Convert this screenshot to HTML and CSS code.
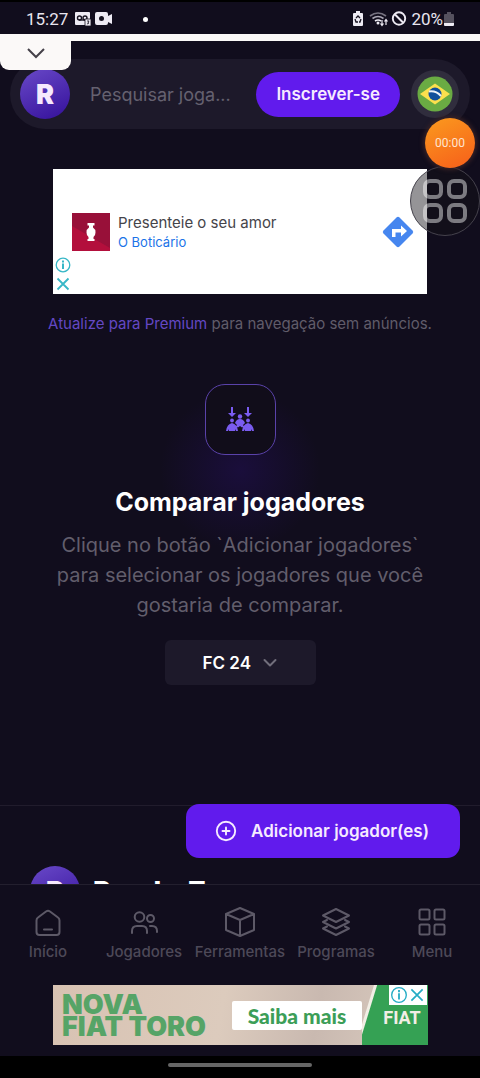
FILE: index.html
```html
<!DOCTYPE html>
<html lang="pt-BR">
<head>
<meta charset="utf-8">
<meta name="viewport" content="width=device-width, initial-scale=1">
<title>Comparar jogadores</title>
<link rel="stylesheet" href="styles.css">
</head>
<body>
<div class="app">
  <div class="status">
    <span class="clock">15:27</span>
    <svg class="status-left" width="38" height="16" viewBox="0 0 38 16">
      <rect x="1" y="1" width="15" height="13" rx="1" fill="#eeebf4"/>
      <g fill="none" stroke="#171321" stroke-width="1.4"><circle cx="5.500" cy="7" r="2"/><circle cx="11" cy="7" r="2"/><path d="M5 9h7"/></g>
      <rect x="11" y="8" width="6" height="7" fill="#eeebf4" stroke="#171321" stroke-width=".8"/><path d="M13 10h2l-1 1.500 1 .5-2 1" stroke="#171321" stroke-width=".8" fill="none"/>
      <path d="M23 1h9q2 0 2 2v2l4-2v10l-4-2v1q0 2-2 2h-9q-2 0-2-2V3q0-2 2-2z" fill="#eeebf4"/><circle cx="27.500" cy="7.500" r="2.500" fill="#171321"/>
    </svg>
    <span class="dot"></span>
    <svg class="status-right" width="56" height="18" viewBox="0 0 56 18">
      <path d="M3 3h2V1h4v2h2q1 0 1 1v11q0 1-1 1H3q-1 0-1-1V4q0-1 1-1z" fill="#eeebf4"/>
      <path d="M5 8l2-2 2 2M10 9l-1 3H8M4 9l1 3h2" stroke="#171321" stroke-width="1.300" fill="none"/>
      <g fill="none" stroke-width="1.700"><path d="M19 6q8-6 16 0" stroke="#777381"/><path d="M21.500 8.500q5.500-4 11 0" stroke="#aaa6b4"/><path d="M24 11q3-2 6 0" stroke="#eeebf4"/></g>
      <circle cx="27" cy="13" r="1.500" fill="#eeebf4"/>
      <path d="M31 10v5M29.500 13.500L31 15.500l1.500-2M35 15v-5M33.500 11.500L35 9.500l1.500 2" stroke="#eeebf4" stroke-width="1.200" fill="none"/>
      <circle cx="48" cy="8.500" r="6.200" fill="none" stroke="#eeebf4" stroke-width="1.900"/><path d="M44 4.500l8 8" stroke="#eeebf4" stroke-width="1.900"/>
    </svg>
    <span class="battery-text">20%</span>
    <svg width="12" height="16" viewBox="0 0 12 16"><path d="M2 3h2V1h4v2h2q1 0 1 1v9H1V4q0-1 1-1z" fill="#55515e"/><path d="M1 12h10v2q0 1-1 1H2q-1 0-1-1z" fill="#eeebf4"/></svg>
  </div>
  <div class="strip">
    <button class="pull-tab" aria-label="Recolher anúncio"><svg width="20" height="12" viewBox="0 0 20 12"><path d="M2 2l8 8 8-8" fill="none" stroke="#444149" stroke-width="2"/></svg></button>
  </div>

  <header class="topbar">
    <a class="logo" href="#" aria-label="RenderZ">R</a>
    <input class="search" type="text" placeholder="Pesquisar joga..." aria-label="Pesquisar jogadores">
    <button class="signup">Inscrever-se</button>
    <button class="flag" aria-label="Idioma">
      <svg width="36" height="36" viewBox="0 0 36 36"><circle cx="18" cy="18" r="17.500" fill="#6aab43"/><path d="M18 7.500L33 18 18 28.500 3 18z" fill="#fce04d"/><circle cx="18" cy="18" r="6.500" fill="#11519c"/><path d="M12 15.500q7-1 12 4.500" fill="none" stroke="#eef3f8" stroke-width="2"/></svg>
    </button>
  </header>

  <div class="stage">
    <main class="content">
      <section class="ad">
        <svg class="ad-brand" width="38" height="38" viewBox="0 0 38 38"><path fill="#b30f3c" d="M0 0h38v38H0z"/><path fill="#981039" d="M0 13l38 22V0H0z"/><path fill="#fff" d="M15.500 10h7v2.500h-1.500v2q2.500 1.500 2.500 5 0 3-2 4.500v2h1v2h-7v-2h1v-2q-2-1.500-2-4.500 0-3.500 2.500-5v-2h-1.500z"/></svg>
        <div class="ad-copy"><span class="ad-title">Presenteie o seu amor</span><a class="ad-link" href="#">O Boticário</a></div>
        <a class="ad-go" href="#" aria-label="Abrir rota"><svg width="32" height="32" viewBox="0 0 32 32"><path d="M14.500 1.500q1.500-1.500 3 0l13 13q1.500 1.500 0 3l-13 13q-1.500 1.500-3 0l-13-13q-1.500-1.500 0-3z" fill="#4686ef"/><path d="M10 21v-8h9V9.500l6 5.500-6 5.500V16.500h-5.500V21z" fill="#fff"/></svg></a>
        <div class="ad-marks">
          <svg width="16" height="16" viewBox="0 0 16 16" fill="none" stroke="#38b7c7"><circle cx="8" cy="8" r="6.800" stroke-width="1.300"/><path d="M8 6.500V12M8 3.500v2" stroke-width="2"/></svg>
          <svg width="16" height="16" viewBox="0 0 16 16"><path d="M2.500 2.500l11 11M13.500 2.500l-11 11" stroke="#38b7c7" stroke-width="1.800"/></svg>
        </div>
      </section>
      <p class="premium"><a href="#">Atualize para Premium</a> para navegação sem anúncios.</p>

      <section class="compare">
        <div class="compare-icon">
          <svg width="30" height="28" viewBox="0 0 30 28" fill="#7a5cf0"><path d="M6 1h2v6h3l-4 4-4-4h3zM22 1h2v6h3l-4 4-4-4h3z"/><circle cx="7" cy="14.500" r="1.900"/><circle cx="15" cy="10.500" r="2.200"/><circle cx="23" cy="14.500" r="1.900"/><path d="M15 13q3.500 0 5 4l-2 2 1 1.500-2 1-2-1.500-2 1.500-2-1 1-1.500-2-2q1.500-4 5-4zM7 17q5 1 6 8h-2l-1-2v2H4v-2l-1 2H1q1-7 6-8zM23 17q5 1 6 8h-2l-1-2v2h-6v-2l-1 2h-2q1-7 6-8z"/></svg>
        </div>
        <h1>Comparar jogadores</h1>
        <p class="hint">Clique no botão `Adicionar jogadores` para selecionar os jogadores que você gostaria de comparar.</p>
        <label class="version">
          <select aria-label="Versão do jogo"><option>FC 24</option></select>
          <svg width="14" height="10" viewBox="0 0 14 10"><path d="M1.500 2L7 7.500 12.500 2" fill="none" stroke="#716e7b" stroke-width="2" stroke-linecap="round" stroke-linejoin="round"/></svg>
        </label>
      </section>

      <footer class="footer"><span class="logo">R</span><span class="brand">RenderZ</span></footer>
    </main>
    <button class="add"><svg width="22" height="22" viewBox="0 0 22 22" fill="none" stroke="#f5eaff" stroke-width="1.900" stroke-linecap="round"><circle cx="11" cy="11" r="9.200"/><path d="M11 7.500v7M7.500 11h7"/></svg>Adicionar jogador(es)</button>
  </div>

  <nav class="tabs">
    <a href="#"><svg viewBox="0 0 32 32"><path d="M4.500 13.500q0-2 1.500-3l8-6q2-1.300 4 0l8 6q1.500 1 1.500 3V25q0 3-3 3h-17q-3 0-3-3zM12 22.500h8"/></svg>Início</a>
    <a href="#"><svg viewBox="0 0 32 32"><circle cx="11.500" cy="10" r="4.800"/><circle cx="22.500" cy="11.500" r="3.500"/><path d="M4 26v-2q0-5 5-5h5q5 0 5 5v2M22 19h2q5 0 5 5v1"/></svg>Jogadores</a>
    <a href="#"><svg viewBox="0 0 32 32"><path d="M16 1l14 6v16l-14 6-14-6V7zM2 7l14 6 14-6M16 13v16"/></svg>Ferramentas</a>
    <a href="#"><svg viewBox="0 0 32 32"><path d="M16 2l13 6.500L16 15 3 8.500zM7 13l-4 2 13 6.500L29 15l-4-2M7 19.500l-4 2L16 28l13-6.500-4-2"/></svg>Programas</a>
    <a href="#"><svg viewBox="0 0 32 32"><rect x="3.500" y="2.500" width="10" height="10" rx="1.500"/><rect x="18.500" y="2.500" width="10" height="10" rx="1.500"/><rect x="3.500" y="17.500" width="10" height="10" rx="1.500"/><rect x="18.500" y="17.500" width="10" height="10" rx="1.500"/></svg>Menu</a>
  </nav>

  <section class="banner">
    <div class="banner-title"><span>NOVA</span><span>FIAT TORO</span></div>
    <a class="banner-cta" href="#">Saiba mais</a>
    <div class="banner-brand">FIAT</div>
    <div class="banner-marks">
      <svg width="18" height="18" viewBox="0 0 16 16" fill="none" stroke="#25acc5"><circle cx="8" cy="8" r="6.500" stroke-width="1.200"/><path d="M8 6.500V12M8 3.500v2" stroke-width="1.600"/></svg>
      <svg width="18" height="18" viewBox="0 0 16 16"><path d="M3 3l10 10M13 3L3 13" stroke="#25acc5" stroke-width="1.500"/></svg>
    </div>
  </section>
  <div class="gesture"><span></span></div>

  <div class="recorder">00:00</div>
  <button class="assist" aria-label="Atalhos"><svg width="46" height="46" viewBox="0 0 46 46" fill="none" stroke="#fff" stroke-opacity=".45" stroke-width="4"><rect x="3" y="3" width="16" height="16" rx="5"/><rect x="27" y="3" width="16" height="16" rx="5"/><rect x="3" y="27" width="16" height="16" rx="5"/><rect x="27" y="27" width="16" height="16" rx="5"/></svg></button>
</div>
</body>
</html>
```

FILE: styles.css
```css
* { box-sizing: border-box; }
body { margin: 0; background: #110d1d; color: #fff; font-family: Inter, "Noto Sans", sans-serif; }
a { color: inherit; text-decoration: none; }
button, input, select { font: inherit; color: inherit; border: 0; padding: 0; margin: 0; background: none; }
svg { display: block; flex: none; }
h1, p { margin: 0; }

.app { position: relative; display: flex; flex-direction: column; height: 100vh; overflow: hidden; }

.status { display: flex; align-items: center; height: 34px; padding: 2px 25px 0 26px; border-top: 2px solid #000; font: 17px Roboto, sans-serif; color: #e8e5ef; }
.status-left { margin-left: 6px; }
.dot { width: 5px; height: 5px; margin-left: 31px; border-radius: 50%; background: #fff; }
.status-right { margin: 0 4px 0 auto; }
.strip { position: relative; height: 7px; background: #fbf9f8; }
.pull-tab { position: absolute; top: 0; left: 0; z-index: 2; display: flex; justify-content: center; padding: 13px 0 11px; width: 71px; height: 36px; background: #fbf9f8; border-radius: 0 0 9px 9px; }

.topbar { display: flex; align-items: center; height: 70px; margin: 18px 10px 0; padding: 0 11px 0 10px; border-radius: 35px; background: #1d192a; }
.logo { display: flex; align-items: center; justify-content: center; flex: none; width: 50px; height: 50px; border-radius: 50%; background: linear-gradient(155deg, #6949c8, #34109a); font-size: 27px; font-weight: 900; color: #f6e9fd; }
.search { flex: 1; min-width: 0; margin: 0 16px 0 20px; height: 44px; font-size: 18px; outline: 0; text-overflow: ellipsis; }
.search::placeholder { color: #656170; opacity: 1; }
.signup { height: 45px; padding: 0 20px; border-radius: 23px; background: #611bed; font-size: 17px; font-weight: 600; color: #f6eaff; }
.flag { display: flex; align-items: center; justify-content: center; width: 48px; height: 48px; margin-left: 11px; border-radius: 50%; background: #302d3d; }

.stage { position: relative; flex: 1; min-height: 0; }
.content { height: 100%; padding-top: 40px; overflow: hidden; }
.ad { position: relative; display: flex; align-items: center; height: 125px; margin: 0 53px; padding: 0 13px 0 19px; background: #fff; color: #45444a; }
.ad-copy { display: flex; flex-direction: column; flex: 1; margin-left: 8px; }
.ad-title { font-size: 15px; line-height: 20px; }
.ad-link { font-size: 13px; line-height: 18px; color: #1a73e8; }
.ad-marks { position: absolute; left: 2px; bottom: 2px; display: grid; gap: 3px; }
.premium { margin-top: 20px; font-size: 15px; line-height: 20px; text-align: center; color: #605c6a; }
.premium a { color: #6448c4; }

.compare { display: flex; flex-direction: column; align-items: center; height: 471px; padding: 50px 50px 0; background: radial-gradient(circle at 50% 136px, #1a0e3b 0, #110d1d 80px); }
.compare-icon { display: flex; align-items: center; justify-content: center; width: 71px; height: 71px; border: 1px solid #5a42aa; border-radius: 20px; background: #110d1a; }
h1 { margin-top: 31px; font-size: 25px; line-height: 32px; font-weight: 700; }
.hint { margin-top: 12px; font-size: 20px; line-height: 30px; text-align: center; color: #625e6c; }
.version { position: relative; margin-top: 20px; }
.version select { width: 151px; height: 45px; padding: 0 60px 0 38px; border-radius: 6px; appearance: none; background: #1d192a; font-size: 17px; font-weight: 600; }
.version svg { position: absolute; right: 39px; top: 18px; pointer-events: none; }

.footer { display: flex; align-items: center; gap: 13px; padding: 60px 30px; border-top: 1px solid #211c2c; }
.brand { font-size: 27px; font-weight: 800; }
.add { position: absolute; right: 20px; bottom: 26px; display: flex; align-items: center; gap: 14px; height: 54px; padding: 0 31px 0 29px; border-radius: 13px; background: #611bed; font-size: 17px; font-weight: 600; color: #f6eaff; }

.tabs { display: grid; grid-template-columns: repeat(5, 1fr); height: 101px; padding-top: 22px; border-top: 1px solid #231f2e; }
.tabs a { display: flex; flex-direction: column; align-items: center; gap: 3px; font-size: 15px; font-weight: 500; line-height: 20px; color: #4d4958; }
.tabs svg { width: 32px; height: 32px; fill: none; stroke: #5d5967; stroke-width: 2; stroke-linejoin: round; stroke-linecap: round; }

.banner { position: relative; display: flex; align-items: center; height: 60px; margin: 0 52px 0 53px; padding-left: 9px; background: linear-gradient(100deg, #d8c2b2, #dccbbd 45%, #c9b9b0 70%, #dccdc1); font-family: Lato, sans-serif; font-weight: 900; color: #56a467; overflow: hidden; }
.banner-title { display: grid; flex: 1; padding-top: 2px; font-family: Inter, sans-serif; font-size: 27px; line-height: 22px; white-space: nowrap; }
.banner-cta { display: flex; align-items: center; justify-content: center; width: 130px; height: 29px; border-radius: 2px; background: #fff; color: #3c9e58; font-size: 21px; }
.banner-brand { display: flex; align-items: center; justify-content: center; width: 66px; height: 60px; padding: 4px 0 0 14px; background: linear-gradient(107deg, transparent 11px, #f2eee5 12px 14px, #35a154 15px); color: #f2eee5; font: 700 18px Roboto, sans-serif; }
.banner-marks { position: absolute; top: 0; right: 1px; display: flex; height: 20px; padding: 1px; background: #fff; }
.gesture { display: flex; justify-content: center; height: 22px; margin-top: 11px; padding-top: 7px; background: #000; }
.gesture span { width: 144px; height: 4px; border-radius: 2px; background: #666; }

.recorder { position: absolute; top: 118px; right: 5px; z-index: 2; display: flex; align-items: center; justify-content: center; width: 50px; height: 50px; border-radius: 50%; background: linear-gradient(155deg, #fb9a1e, #f65e1a); box-shadow: 0 0 4px 2px #382226; font: 12px Roboto, sans-serif; color: #ffe4cf; }
.assist { position: absolute; top: 166px; right: 0; display: flex; align-items: center; justify-content: center; width: 70px; height: 70px; border: 1px solid #45424c; border-radius: 50%; background: rgba(20, 18, 25, .45); }
```
